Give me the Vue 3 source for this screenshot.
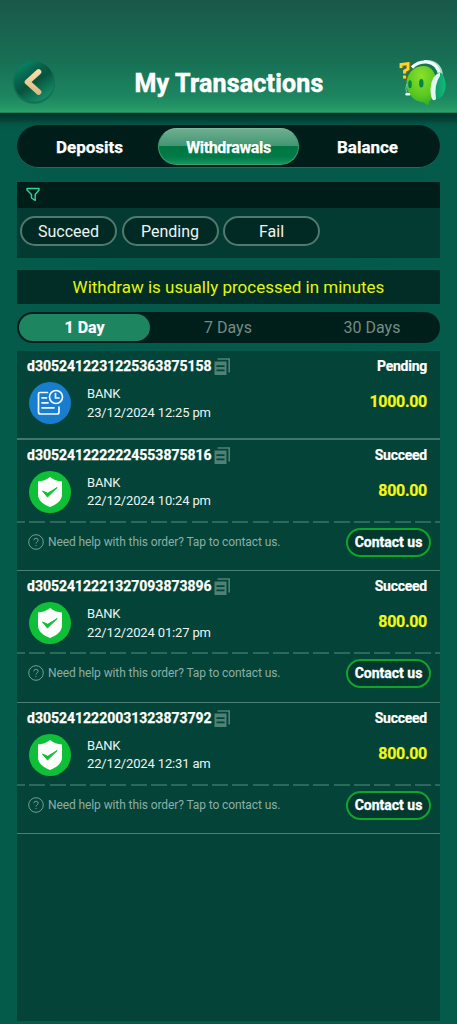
<script setup>
const tabs = ['Deposits', 'Withdrawals', 'Balance']
const filters = ['Succeed', 'Pending', 'Fail']
const days = ['1 Day', '7 Days', '30 Days']
const orders = [
  { id: 'd3052412231225363875158', status: 'Pending', date: '23/12/2024 12:25 pm', amount: '1000.00' },
  { id: 'd3052412222224553875816', status: 'Succeed', date: '22/12/2024 10:24 pm', amount: '800.00' },
  { id: 'd3052412221327093873896', status: 'Succeed', date: '22/12/2024 01:27 pm', amount: '800.00' },
  { id: 'd3052412220031323873792', status: 'Succeed', date: '22/12/2024 12:31 am', amount: '800.00' },
]
</script>

<template>
  <div class="page">
    <header class="header">
      <svg class="back" viewBox="0 0 44 44">
        <defs>
          <linearGradient id="ball" x1="0" y1="0" x2="0.7" y2="1">
            <stop offset="0" stop-color="#079873" />
            <stop offset=".35" stop-color="#07684f" />
            <stop offset=".58" stop-color="#07533d" />
            <stop offset="1" stop-color="#159069" />
          </linearGradient>
          <linearGradient id="gold" x1="0" y1="0" x2="0" y2="1">
            <stop offset="0" stop-color="#f3dfaa" />
            <stop offset="1" stop-color="#dfbd83" />
          </linearGradient>
        </defs>
        <circle cx="22" cy="22.800" r="21" fill="#07553f" opacity=".5" />
        <circle cx="22" cy="21.500" r="20.500" fill="url(#ball)" stroke="#137558" stroke-width="1" />
        <path d="M26.500 12L15.500 22l11 10" fill="none" stroke="url(#gold)" stroke-width="5.600" stroke-linecap="round" stroke-linejoin="round" />
      </svg>
      <h1 class="title">My Transactions</h1>
      <svg class="support" viewBox="0 0 50 48">
        <defs>
          <radialGradient id="face" cx=".5" cy=".25" r=".85">
            <stop offset="0" stop-color="#8ae02a" />
            <stop offset=".6" stop-color="#58c820" />
            <stop offset="1" stop-color="#219f32" />
          </radialGradient>
          <linearGradient id="cup" x1="0" y1="0" x2="1" y2="0">
            <stop offset="0" stop-color="#0a9a62" />
            <stop offset="1" stop-color="#14ba7c" />
          </linearGradient>
        </defs>
        <path d="M28 1.500Q44 1 45.500 15" fill="none" stroke="#a5ddcf" stroke-width="3" />
        <path d="M10.500 25C10 15 17 6 27 6c9 0 13 7 13 17 0 8-3 15-6.500 18.500L32 46l-4-3.500C19 42 11 35 10.500 25z" fill="url(#face)" />
        <path d="M16 7.500Q22 1.500 31 2q11 1.500 12.500 13" fill="none" stroke="#f3fffb" stroke-width="3.200" />
        <path d="M41 13q5-2 7 4 4 10-1 18-3 5-9 4 0-14 3-26z" fill="url(#cup)" />
        <path d="M44 12.500Q35.500 15 34.500 29q0 9 2.500 11 2.500.500 3-1-2-15 4-23z" fill="#e3f6f3" />
        <ellipse cx="14" cy="24.300" rx="1.800" ry="4" fill="#078447" />
        <ellipse cx="25.300" cy="23.300" rx="2.200" ry="4.300" fill="#078447" />
        <path d="M10.800 24q-2 5 .2 9" fill="none" stroke="#7ac9a2" stroke-width="1" />
        <path d="M10.500 34.300h2.500" stroke="#efffff" stroke-width="2.400" stroke-linecap="round" />
        <path d="M5.500 8.500V5l7-1v5.500L9 11.500V14M9 16v3" fill="none" stroke="#7a6a18" stroke-width="4" />
        <path d="M5 8V4.500l7-1V9L8.500 11v2.500M8.500 15.500v3" fill="none" stroke="#ffd52b" stroke-width="2.800" />
      </svg>
    </header>

    <main class="content">
      <nav class="tabs">
        <div v-for="(t, i) in tabs" :key="t" class="tab" :class="{ active: i === 1 }"><span>{{ t }}</span></div>
      </nav>

      <section class="filter">
        <div class="filter-head">
          <svg class="funnel" viewBox="0 0 14 14">
            <path d="M1 1h12v1.500L9.200 7v6L5.500 10.500V7L1 2.500z" fill="none" stroke="#2ed59b" stroke-width="1.400" stroke-linejoin="round" />
          </svg>
        </div>
        <div class="chips">
          <div v-for="f in filters" :key="f" class="chip">{{ f }}</div>
        </div>
      </section>

      <p class="notice"><span>Withdraw is usually processed in minutes</span></p>

      <nav class="days">
        <div v-for="(d, i) in days" :key="d" class="day" :class="{ active: i === 0 }"><span>{{ d }}</span></div>
      </nav>

      <section class="list">
        <article v-for="o in orders" :key="o.id" class="order" :class="{ pending: o.status === 'Pending' }">
          <div class="order-head">
            <span class="order-id">{{ o.id }}</span>
            <svg class="copy" viewBox="0 0 16 17">
              <path d="M3.500 1h11.700v13.500" fill="none" stroke="#4f8175" stroke-width="1.600" />
              <path d="M.5 3.500h12V17H.5z" fill="#4f8175" />
              <path d="M2.500 8.200h8M2.500 12.400h8" stroke="#034438" stroke-width="1.700" />
            </svg>
            <span class="status">{{ o.status }}</span>
          </div>
          <div class="order-body">
            <svg v-if="o.status === 'Pending'" class="badge" viewBox="0 0 42 42">
              <circle cx="21" cy="21" r="21" fill="#187dcc" />
              <g fill="none" stroke="#f2f9ff" stroke-width="1.700" stroke-linecap="round" stroke-linejoin="round">
                <path d="M18.500 10.500H11q-1.500 0-1.500 1.500v18q0 2 2 2H28q2 0 2-2v-5M13 15.800h4.500M13 20.800h6M13 25.800h12" />
                <circle cx="27" cy="15" r="6.500" />
                <path d="M26.500 11.500V16H30" />
              </g>
            </svg>
            <svg v-else class="badge" viewBox="0 0 42 42">
              <circle cx="21" cy="21" r="21" fill="#10bf38" />
              <path d="M21 6q5 4 12 4.500v13C33 30 27 33.500 21 36 15 33.500 9 30 9 23.500v-13Q16 10 21 6z" fill="#fff" />
              <path d="M13.500 20l5 6 9.700-9.500-9.400 5.800z" fill="#10bf38" stroke="#10bf38" stroke-width="1" />
            </svg>
            <div class="info">
              <span class="bank">BANK</span>
              <span class="date">{{ o.date }}</span>
            </div>
            <span class="amount">{{ o.amount }}</span>
          </div>
          <div v-if="o.status !== 'Pending'" class="help">
            <svg class="q" viewBox="0 0 16 16" fill="none" stroke="#759e93" stroke-width="1">
              <circle cx="8" cy="8" r="7.300" />
              <path d="M5.800 6.300Q5.900 4.200 8 4.200t2.200 1.900Q10.200 7 9 7.900q-1 .7-1 1.700M8 11v1.100" />
            </svg>
            <span class="help-text">Need help with this order? Tap to contact us.</span>
            <button class="contact"><span>Contact us</span></button>
          </div>
        </article>
      </section>
    </main>
  </div>
</template>

<style>
body { margin: 0; background: #04594a; }
</style>

<style scoped>
* { box-sizing: border-box; }
.page {
  width: 457px; height: 1024px; overflow: hidden; display: flex; flex-direction: column;
  font-family: Roboto, "Liberation Sans", sans-serif; color: #fff;
  background: linear-gradient(90deg, #045b4a, #04594a 50%, #045b4a);
}
.header {
  height: 113px; flex: none; display: flex; justify-content: space-between; align-items: flex-start;
  padding: 60px 11px 0 12px; border-bottom: 1px solid #218259;
  background: linear-gradient(#1a5849 0, #196250 28px, #176f54 60px, #1c8560 96px, #269765 108px, #2ca16b 112px);
}
.back { width: 44px; height: 44px; }
.title {
  margin: 10px 0 0 6px; font-size: 25px; line-height: 28px; font-weight: 700; white-space: nowrap;
  letter-spacing: .2px; -webkit-text-stroke: .5px #fff;
}
.support { width: 50px; height: 48px; }
.content {
  flex: 1; display: flex; flex-direction: column; padding: 12px 17px 3px;
  background: linear-gradient(#023429 0, #034338 7px, rgba(3, 80, 66, .5) 11px, transparent 17px);
}
.tabs {
  flex: none; height: 43px; border-radius: 22px; background: #001d19; border-bottom: 1px solid #236b5d;
  display: grid; grid-template-columns: 141px 141px 1fr; align-items: center;
}
.tab { height: 37px; line-height: 39px; text-align: center; font-size: 17px; font-weight: 700; -webkit-text-stroke: .25px #fff; }
.tab:first-child span { margin-left: 4px; }
.tab:last-child span { margin-right: 4px; }
.tab.active {
  font-size: 16px; letter-spacing: -.35px; border-radius: 19px; border: 1px solid #36a171; border-top-color: #7bb99d; line-height: 38px;
  background: linear-gradient(#6eae90 0, #429673 48%, #007642 50%, #007b47 80%, #17965e);
}
.filter { flex: none; margin-top: 14px; height: 76px; background: #033b32; }
.filter-head { height: 26px; background: #001d19; padding: 5px 0 0 9px; }
.funnel { width: 14px; height: 15px; display: block; }
.chips { display: flex; gap: 4.500px; padding: 8px 3px; }
.chip {
  width: 97px; height: 30px; border: 2px solid #51796f; border-radius: 15px; background: #022a24;
  font-size: 16px; line-height: 28px; text-align: center; color: #edf5f2;
}
.notice {
  flex: none; margin: 12px 0 0; height: 34px; line-height: 34px; text-align: center;
  font-size: 17px; color: #e5f60d; background: #022d26;
}
.days {
  flex: none; margin-top: 8px; height: 31px; padding: 2px; border-radius: 16px; background: #001f1a;
  display: grid; grid-template-columns: 131px 156px 1fr;
}
.day { height: 27px; line-height: 28px; text-align: center; font-size: 16px; color: #738c86; }
.day.active { color: #fff; font-weight: 700; background: #1d8560; border-radius: 14px; -webkit-text-stroke: .2px #fff; }
.list { flex: 1; margin-top: 8px; background: #034338; }
.order { height: 131.500px; border-bottom: 1.500px solid #4b8075; }
.order.pending { height: 88.500px; border-bottom-width: 2px; border-bottom-color: #41776c; }
.order-head { height: 30px; display: flex; align-items: flex-start; padding: 5px 13px 0 10px; line-height: 20px; }
.order-id { font-size: 14px; font-weight: 700; width: 185px; white-space: nowrap; -webkit-text-stroke: .25px #fff; }
.copy { width: 16px; height: 17px; margin: 2px 0 0 2px; }
.status { margin-left: auto; font-size: 14px; letter-spacing: -.25px; line-height: 20px; font-weight: 700; -webkit-text-stroke: .2px #fff; }
.order-body { height: 51px; display: flex; padding: 0 13px 0 12px; }
.badge { width: 42px; height: 42px; flex: none; margin-top: 1px; }
.info { margin: 4px 0 0 16px; display: flex; flex-direction: column; font-size: 13px; line-height: 18.500px; color: #ecf4f1; }
.bank { letter-spacing: -.2px; }
.date { letter-spacing: -.150px; }
.amount { margin: 8px 0 0 auto; font-size: 16px; letter-spacing: -.3px; line-height: 25px; font-weight: 700; color: #f5f714; -webkit-text-stroke: .2px #f5f714; }
.help {
  height: 47px; display: flex; align-items: flex-start; padding: 7px 9px 0 11px; color: #8caea5;
  background: repeating-linear-gradient(90deg, #2c685b 0 16px, transparent 16px 20.300px) -8px 0 / 440px 2px no-repeat;
}
.q { width: 16px; height: 16px; margin-top: 6px; }
.help-text { margin: 7px 0 0 4px; font-size: 12px; letter-spacing: -.1px; line-height: 15px; white-space: nowrap; }
.contact {
  margin: 0 0 0 auto; width: 85px; height: 29px; padding: 0; border: 2px solid #0fa52c; border-radius: 15px;
  background: #03382f; color: #fff; font: 700 14px/25px Roboto, sans-serif; white-space: nowrap; -webkit-text-stroke: .3px #fff;
}
</style>
